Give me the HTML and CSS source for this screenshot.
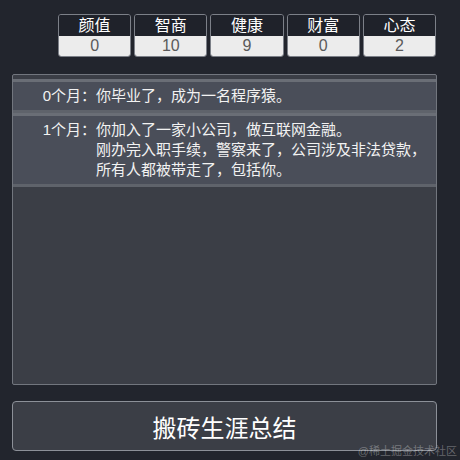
FILE: index.html
```html
<!DOCTYPE html>
<html lang="zh">
<head>
<meta charset="utf-8">
<link rel="stylesheet" href="styles.css">
</head>
<body>
<div class="page">
  <div class="stats">
    <div class="stat"><div class="stat-name">颜值</div><div class="stat-val">0</div></div>
    <div class="stat"><div class="stat-name">智商</div><div class="stat-val">10</div></div>
    <div class="stat"><div class="stat-name">健康</div><div class="stat-val">9</div></div>
    <div class="stat"><div class="stat-name">财富</div><div class="stat-val">0</div></div>
    <div class="stat"><div class="stat-name">心态</div><div class="stat-val">2</div></div>
  </div>
  <div class="panel">
    <div class="item">
      <div class="month">0个月：</div>
      <div class="text">你毕业了，成为一名程序猿。</div>
    </div>
    <div class="item">
      <div class="month">1个月：</div>
      <div class="text">你加入了一家小公司，做互联网金融。<br>刚办完入职手续，警察来了，公司涉及非法贷款，<br>所有人都被带走了，包括你。</div>
    </div>
  </div>
  <div class="summary">搬砖生涯总结</div>
</div>
<div class="watermark">@稀土掘金技术社区</div>
</body>
</html>
```
FILE: styles.css
```css
html, body {
  margin: 0;
  padding: 0;
  background: #22252d;
  width: 460px;
  height: 460px;
  overflow: hidden;
  font-family: "Liberation Sans", "Noto Sans CJK SC", sans-serif;
}
.page {
  width: 425px;
  padding: 14px 0 0 12px;
  display: flex;
  flex-direction: column;
}
.stats {
  display: flex;
  gap: 3px;
  margin-left: 46px;
  width: 378px;
}
.stat {
  flex: 1;
  border: 1px solid #7c8088;
  border-radius: 3px;
  overflow: hidden;
  text-align: center;
}
.stat-name {
  height: 21px;
  line-height: 21px;
  background: #1f222a;
  color: #ffffff;
  font-size: 16px;
}
.stat-val {
  height: 20px;
  line-height: 20px;
  background: #ececec;
  color: #5a5a5a;
  font-size: 16px;
}
.panel {
  margin-top: 17px;
  height: 311px;
  box-sizing: border-box;
  background: #3b3e46;
  border: 1px solid #72767e;
  border-radius: 2px;
  padding-top: 4px;
}
.item {
  display: flex;
  background: #4a4e59;
  border-top: 3px solid #6a6e76;
  border-bottom: 3px solid #5f636b;
  padding: 4px 0;
  color: #f2f2f2;
  font-size: 15px;
  line-height: 20px;
}
.month {
  width: 83px;
  flex-shrink: 0;
  text-align: right;
}
.text {
  flex: 1;
  white-space: nowrap;
}
.summary {
  margin-top: 16px;
  height: 50px;
  box-sizing: border-box;
  border: 1.5px solid #8c9098;
  border-radius: 4px;
  background: #3b3e46;
  color: #ffffff;
  font-size: 24px;
  display: flex;
  align-items: center;
  justify-content: center;
}
.watermark {
  position: absolute;
  right: 3px;
  bottom: 2px;
  font-size: 11px;
  color: rgba(255, 255, 255, 0.3);
}
```
